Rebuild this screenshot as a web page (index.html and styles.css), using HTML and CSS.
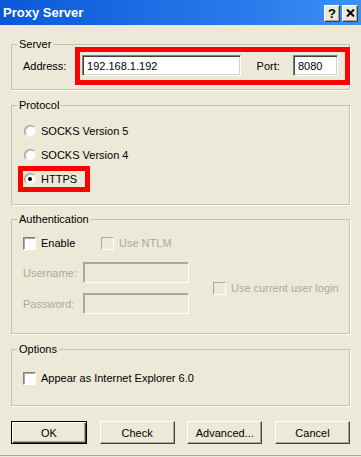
FILE: index.html
```html
<!DOCTYPE html>
<html lang="en">
<head>
    <meta charset="UTF-8">
    <title>Proxy Server</title>
    <link rel="stylesheet" href="styles.css">
</head>
<body>
    <div class="window">
        <div class="titlebar">
            <span class="title">Proxy Server</span>
            <div class="title-btns">
                <span class="tbtn">?</span>
                <span class="tbtn">
                    <svg width="9" height="8" viewBox="0 0 9 8"><path d="M1 0.5 L8 7.5 M8 0.5 L1 7.5" stroke="#000" stroke-width="2"/></svg>
                </span>
            </div>
        </div>

        <div class="dialog">
            <fieldset class="group server">
                <legend>Server</legend>
                <div class="server-row">
                    <label class="lbl-addr">Address:</label>
                    <input class="field addr" type="text" value="192.168.1.192">
                    <label class="lbl-port">Port:</label>
                    <input class="field port" type="text" value="8080">
                    <div class="mark mark-server"></div>
                </div>
            </fieldset>

            <fieldset class="group protocol">
                <legend>Protocol</legend>
                <div class="radio-row"><span class="radio"></span>SOCKS Version 5</div>
                <div class="radio-row"><span class="radio"></span>SOCKS Version 4</div>
                <div class="radio-row https">
                    <span class="radio checked"></span>HTTPS
                    <div class="mark mark-https"></div>
                </div>
            </fieldset>

            <fieldset class="group auth">
                <legend>Authentication</legend>
                <div class="check-row">
                    <div class="check-item enable"><span class="check"></span>Enable</div>
                    <div class="check-item disabled"><span class="check"></span>Use NTLM</div>
                </div>
                <div class="auth-grid">
                    <label class="disabled">Username:</label>
                    <input class="field off" type="text" disabled>
                    <div class="check-item disabled login"><span class="check"></span>Use current user login</div>
                    <label class="disabled">Password:</label>
                    <input class="field off" type="password" disabled>
                </div>
            </fieldset>

            <fieldset class="group options">
                <legend>Options</legend>
                <div class="check-item"><span class="check"></span>Appear as Internet Explorer 6.0</div>
            </fieldset>

            <div class="buttons">
                <button class="btn default">OK</button>
                <button class="btn">Check</button>
                <button class="btn">Advanced...</button>
                <button class="btn">Cancel</button>
            </div>
        </div>
    </div>
</body>
</html>
```

FILE: styles.css
```css
html {
    background-color: #ece9d8;
}
body {
    margin: 0;
    font-family: "Liberation Sans", Arial, sans-serif;
    font-size: 11px;
    color: #000;
}
.window {
    width: 361px;
    background-color: #ece9d8;
}
.titlebar {
    height: 25px;
    display: flex;
    align-items: center;
    justify-content: space-between;
    background: linear-gradient(to right, #0a58d8, #2a7cec 70%, #3d91f5);
}
.title {
    padding-left: 3px;
    color: #fff;
    font-weight: bold;
    font-size: 13px;
}
.title-btns {
    display: flex;
    gap: 2px;
    padding-right: 3px;
    margin-top: 1px;
}
.tbtn {
    width: 16px;
    height: 17px;
    box-sizing: border-box;
    display: flex;
    align-items: center;
    justify-content: center;
    background-color: #ece9d8;
    border: 1px solid;
    border-color: #fff #404040 #404040 #fff;
    box-shadow: inset -1px -1px 0 #aca899;
    font-weight: bold;
    font-size: 13px;
    line-height: 1;
}
.dialog {
    padding: 13px 11px 11px;
    border-bottom: 1px solid #aca899;
}
.group {
    margin: 0;
    min-width: 0;
    border: 1px solid #c5c2b2;
    box-shadow: 1px 1px 0 #fff;
    padding: 0 11px;
}
.group legend {
    margin-left: -6px;
    padding: 0 2px;
    line-height: 13px;
}
.server {
    padding-top: 4px;
    padding-bottom: 13px;
}
.protocol {
    margin-top: 9px;
    padding-top: 7px;
    padding-bottom: 13px;
}
.auth {
    margin-top: 8px;
    padding-top: 9px;
    padding-bottom: 19px;
}
.options {
    margin-top: 9px;
    padding-top: 14px;
    padding-bottom: 19px;
}

/* inputs */
.field {
    box-sizing: border-box;
    height: 21px;
    margin: 0;
    padding: 0 4px;
    font-family: inherit;
    font-size: 11px;
    background-color: #fff;
    border: 1px solid;
    border-color: #808080 #fff #fff #808080;
    box-shadow: inset 1px 1px 0 #404040, inset -1px -1px 0 #d4d0c8;
    outline: none;
}
.field.off {
    background-color: #ece9d8;
    box-shadow: inset 1px 1px 0 #aca899, inset -1px -1px 0 #ece9d8;
    border-color: #aca899 #fff #fff #aca899;
}

.server-row {
    position: relative;
    display: flex;
    align-items: center;
    height: 21px;
}
.lbl-addr {
    width: 60px;
}
.addr {
    width: 161px;
}
.lbl-port {
    margin-left: 16px;
    width: 37px;
}
.port {
    width: 45px;
}

/* annotation boxes */
.mark {
    position: absolute;
    box-sizing: border-box;
    border: 5px solid #ff0000;
}
.mark-server {
    left: 52px;
    top: -8px;
    width: 275px;
    height: 38px;
}
.mark-https {
    left: -5px;
    top: -1px;
    width: 72px;
    height: 26px;
}

/* radios */
.radio-row {
    position: relative;
    display: flex;
    align-items: center;
    gap: 5px;
    height: 24px;
}
.radio {
    width: 12px;
    height: 12px;
    box-sizing: border-box;
    margin-left: 1px;
    border-radius: 50%;
    background-color: #fff;
    border: 1px solid;
    border-color: #9d9b8e #f4f3ee #f4f3ee #9d9b8e;
    box-shadow: inset 1px 1px 0 #d0cec2;
    display: flex;
    align-items: center;
    justify-content: center;
}
.radio.checked::after {
    content: "";
    width: 4px;
    height: 4px;
    border-radius: 50%;
    background-color: #000;
}

/* checkboxes */
.check-row {
    display: flex;
    height: 16px;
    align-items: center;
}
.check-item {
    display: flex;
    align-items: center;
    gap: 5px;
    height: 16px;
    white-space: nowrap;
}
.check-item.enable {
    width: 78px;
}
.check {
    flex: none;
    width: 13px;
    height: 13px;
    box-sizing: border-box;
    background-color: #fff;
    border: 1px solid;
    border-color: #808080 #fff #fff #808080;
    box-shadow: inset 1px 1px 0 #aca899;
}
.disabled {
    color: #aca899;
}
.disabled .check {
    background-color: #ece9d8;
    border-color: #aca899 #fff #fff #aca899;
    box-shadow: none;
}

.auth-grid {
    margin-top: 11px;
    display: grid;
    grid-template-columns: 60px 106px 1fr;
    grid-template-rows: 21px 21px;
    row-gap: 10px;
    align-items: center;
}
.auth-grid .login {
    grid-column: 3;
    grid-row: 1 / span 2;
    margin-left: 24px;
}

/* buttons */
.buttons {
    margin-top: 15px;
    display: flex;
    justify-content: space-between;
}
.btn {
    width: 75px;
    height: 23px;
    box-sizing: border-box;
    margin: 0;
    padding: 0;
    font-family: inherit;
    font-size: 11px;
    color: #000;
    background-color: #ece9d8;
    border: 1px solid;
    border-color: #fff #404040 #404040 #fff;
    box-shadow: inset -1px -1px 0 #aca899;
}
.btn.default {
    width: 76px;
    border-color: #000;
    box-shadow: inset 1px 1px 0 #fff, inset -1px -1px 0 #404040, inset -2px -2px 0 #aca899;
}
```
